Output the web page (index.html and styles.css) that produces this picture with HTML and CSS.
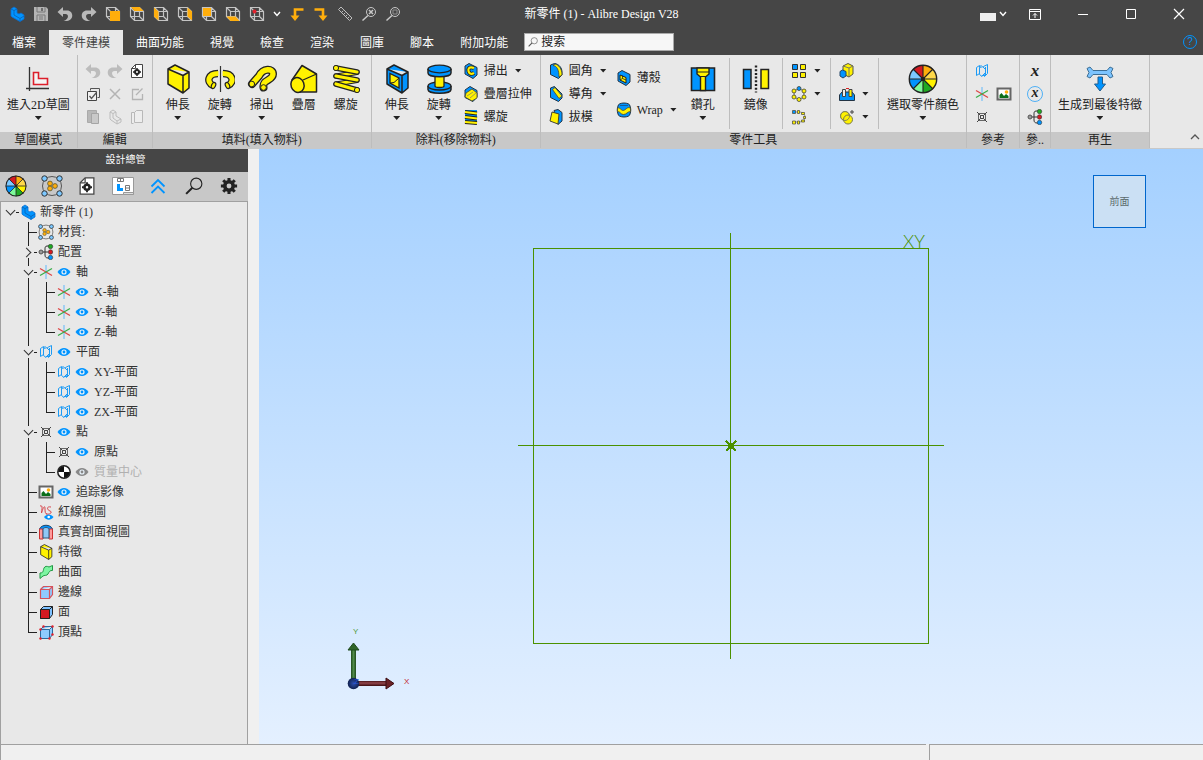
FILE: index.html
```html
<!DOCTYPE html>
<html lang="zh-Hant">

<head>
  <meta charset="UTF-8">
  <meta name="viewport" content="width=device-width, initial-scale=1.0">
  <title>新零件 (1) - Alibre Design V28</title>
  <link rel="stylesheet" href="styles.css">
</head>

<body>
  <!-- icon sprite -->
  <svg class="sprite" aria-hidden="true">
    <symbol id="i-part" viewBox="0 0 16 16">
      <path d="M2 3l3-2 3 2v4l2 1 2-1 3 2v4l-4 2.500-8-4.500-1-1z" fill="#0094ff" stroke="#0b6fd0" stroke-width=".8" />
      <path d="M2 3l3 1.500L8 3M5 4.500V9l6 3.500 4-2.500M11 12.500v3" fill="none" stroke="#0b5fb0" stroke-width=".8" />
    </symbol>
    <symbol id="i-save" viewBox="0 0 16 16">
      <path d="M1 1h12l2 2v12H1z" fill="#b4b4b4" />
      <path d="M4 1v5h8V1M4 15V9h8v6M6 11h4M6 13h4" fill="none" stroke="#787878" />
      <path d="M9 2v3" stroke="#555" stroke-width="1.500" />
    </symbol>
    <symbol id="i-undo" viewBox="0 0 16 16">
      <path d="M.5 6L6 1v3.500h4c7 0 7 10 0 10.500H6.500c5-1 6-7 2-7H6V11z" fill="currentColor" />
    </symbol>
    <symbol id="i-redo" viewBox="0 0 16 16">
      <path d="M15.500 6L10 1v3.500H6c-7 0-7 10 0 10.500h3.500c-5-1-6-7-2-7H10V11z" fill="currentColor" />
    </symbol>
    <symbol id="i-wire" viewBox="0 0 16 16">
      <path d="M1.500 1.500h9l4 4v9h-9l-4-4zM1.500 1.500l4 4h9M5.500 5.500v9M10.500 1.500v9h-9M10.500 10.500l4 4" fill="none" stroke="#c4c4c4" stroke-width="1.200" />
    </symbol>
    <symbol id="i-v-front" viewBox="0 0 16 16">
      <use href="#i-wire" /><path d="M5 5h10v10H5z" fill="#ffae0c" />
    </symbol>
    <symbol id="i-v-top" viewBox="0 0 16 16">
      <use href="#i-wire" /><path d="M2 1h8.500l4 4h-9z" fill="#ffae0c" />
    </symbol>
    <symbol id="i-v-left" viewBox="0 0 16 16">
      <use href="#i-wire" /><path d="M1 1.500l4.500 4v9L1 10.500z" fill="#ffae0c" />
    </symbol>
    <symbol id="i-v-right" viewBox="0 0 16 16">
      <use href="#i-wire" /><path d="M10.500 1.500l4.500 4v9l-4.500-4z" fill="#ffae0c" />
    </symbol>
    <symbol id="i-v-back" viewBox="0 0 16 16">
      <path d="M1 1h10v10H1z" fill="#ffae0c" /><use href="#i-wire" /><path d="M2 2h8v8H2z" fill="#ffae0c" />
    </symbol>
    <symbol id="i-v-bottom" viewBox="0 0 16 16">
      <use href="#i-wire" /><path d="M1.500 10.500h9l4 4.500h-9z" fill="#ffae0c" />
    </symbol>
    <symbol id="i-v-iso" viewBox="0 0 16 16">
      <use href="#i-wire" /><circle cx="5.500" cy="5.500" r="2" fill="#e0202c" />
    </symbol>
    <symbol id="i-rot-l" viewBox="0 0 16 16">
      <path d="M14.500 3.500H6V11" fill="none" stroke="#ffae0c" stroke-width="2.600" /><path d="M1.500 9.500h9L6 15z" fill="#ffae0c" />
    </symbol>
    <symbol id="i-rot-r" viewBox="0 0 16 16">
      <path d="M1.500 3.500H10V11" fill="none" stroke="#ffae0c" stroke-width="2.600" /><path d="M5.500 9.500h9L10 15z" fill="#ffae0c" />
    </symbol>
    <symbol id="i-ruler" viewBox="0 0 16 16">
      <path d="M4 1L1.500 3.500l11 11L15 12zM5 6l1.200-1.200M7 8l1.200-1.200M9 10l1.200-1.200M11 12l1.200-1.200" fill="none" stroke="#bdbdbd" />
    </symbol>
    <symbol id="i-zoomfit" viewBox="0 0 16 16">
      <circle cx="10" cy="6" r="4.500" fill="none" stroke="#c8c8c8" /><path d="M1.500 14.500L7 9.500M8 4l4 4M12 4L8 8" stroke="#c8c8c8" stroke-width="1.500" />
    </symbol>
    <symbol id="i-zoomwin" viewBox="0 0 16 16">
      <circle cx="10" cy="6" r="4.500" fill="none" stroke="#c8c8c8" /><path d="M8 4h4v4H8z" fill="none" stroke="#8e8e8e" /><path d="M1.500 14.500L7 9.500" stroke="#c8c8c8" stroke-width="1.500" />
    </symbol>
    <symbol id="i-chev" viewBox="0 0 8 8">
      <path d="M1 2l3 3.500L7 2" fill="none" stroke="currentColor" stroke-width="1.400" />
    </symbol>
    <symbol id="i-search" viewBox="0 0 16 16">
      <circle cx="10" cy="6" r="5" fill="none" stroke="currentColor" /><path d="M1 15l5.500-5.500" stroke="currentColor" stroke-width="1.800" />
    </symbol>

    <!-- ribbon, large -->
    <symbol id="b-sketch" viewBox="0 0 30 30">
      <path d="M10.500 8.500h5v6h9v6h-14z" fill="#f4f4f4" stroke="#dc1e2b" stroke-width="1.600" />
      <path d="M6.500 3v24M3 24.500h23" stroke="#333" stroke-width="1.300" />
    </symbol>
    <symbol id="b-extrude" viewBox="0 0 30 30">
      <path d="M5 5l7-4 14 7v16l-6 5-15-9zM5 5l15 6.500L26 8M20 11.500V29" fill="#fff200" stroke="#222" stroke-width="1.500" stroke-linejoin="round" />
    </symbol>
    <symbol id="b-revolve" viewBox="0 0 30 30">
      <path d="M8 21.500C1 18 3 9.500 13 9.500M23 21.500c7-3.500 5-12-5-12" fill="none" stroke="#222" stroke-width="7.500" />
      <path d="M8 21.500C1 18 3 9.500 13.500 9.500M23 21.500c7-3.500 5-12-5.500-12" fill="none" stroke="#fff200" stroke-width="5" />
      <ellipse cx="8.500" cy="21.500" rx="2" ry="3.200" fill="#fff200" stroke="#222" stroke-width="1.200" transform="rotate(25 8.500 21.500)" />
      <ellipse cx="22.500" cy="21.500" rx="2" ry="3.200" fill="#fff200" stroke="#222" stroke-width="1.200" transform="rotate(-25 22.500 21.500)" />
      <path d="M13.800 5h3.400v9h-3.400z" fill="#e8e8e8" />
      <path d="M15.500 2v26" stroke="#333" stroke-width="1.200" />
    </symbol>
    <symbol id="b-sweep" viewBox="0 0 30 30">
      <path d="M5 20l7-8c4-8 14-8 14-2 0 7-11 5-9.500 13.500" fill="none" stroke="#222" stroke-width="8" stroke-linecap="round" />
      <path d="M5 20l7-8c4-8 14-8 14-2 0 7-11 5-9.500 13.500" fill="none" stroke="#fff200" stroke-width="5.400" stroke-linecap="round" />
      <circle cx="4.800" cy="20" r="2.800" fill="#fff200" stroke="#222" /><circle cx="16.500" cy="23.500" r="2.800" fill="#fff200" stroke="#222" />
    </symbol>
    <symbol id="b-loft" viewBox="0 0 30 30">
      <path d="M13 1.500L27.500 10v18H9L3 16z" fill="#fff200" stroke="#222" stroke-width="1.500" stroke-linejoin="round" />
      <path d="M14 16l13.500-6" stroke="#222" stroke-width="1.300" />
      <ellipse cx="8.500" cy="21" rx="6.500" ry="7.500" transform="rotate(-20 8.500 21)" fill="#fff200" stroke="#222" stroke-width="1.500" />
    </symbol>
    <symbol id="b-helix" viewBox="0 0 30 30">
      <g fill="none" stroke-linecap="round">
        <path d="M26 8.500L5 12M26 16.500L5 20" stroke="#222" stroke-width="5" />
        <path d="M26 8.500L5 12M26 16.500L5 20" stroke="#fff200" stroke-width="2.800" />
        <path d="M5 4l21 4M5 12l21 4M5 20l21 6" stroke="#222" stroke-width="5.600" />
        <path d="M5 4l21 4M5 12l21 4M5 20l21 6" stroke="#fff200" stroke-width="3.200" />
      </g>
      <circle cx="5" cy="4" r="2.600" fill="#fff200" stroke="#222" /><circle cx="26" cy="26" r="2.600" fill="#fff200" stroke="#222" />
    </symbol>
    <symbol id="b-cut-extrude" viewBox="0 0 30 30">
      <path d="M5 5l7-4 14 7v16l-6 5-15-9zM5 5l15 6.500L26 8M20 11.500V29" fill="#0094ff" stroke="#222" stroke-width="1.500" stroke-linejoin="round" />
      <path d="M8 9.500l9 4.500v10l-9-5z" fill="#fff200" stroke="#222" stroke-width="1.300" /><path d="M17 14l-5 4.500L8 19" fill="none" stroke="#222" />
    </symbol>
    <symbol id="b-cut-revolve" viewBox="0 0 30 30">
      <path d="M4 22v3.500c0 5 23 5 23 0V22" fill="#0094ff" stroke="#222" stroke-width="1.500" />
      <ellipse cx="15.500" cy="22" rx="11.500" ry="4" fill="#0094ff" stroke="#222" stroke-width="1.300" />
      <path d="M11 10v12c0 2 9 2 9 0V10z" fill="#fff200" stroke="#222" stroke-width="1.300" />
      <path d="M4 5v4c0 5 23 5 23 0V5" fill="#0094ff" stroke="#222" stroke-width="1.500" />
      <ellipse cx="15.500" cy="5" rx="11.500" ry="3.800" fill="#0094ff" stroke="#222" stroke-width="1.300" />
    </symbol>
    <symbol id="b-hole" viewBox="0 0 30 30">
      <path d="M3.500 4h23v22.500h-23z" fill="#0094ff" stroke="#222" stroke-width="1.600" />
      <path d="M9 4h12v6l-3.500 3v13.500h-5V13L9 10z" fill="#fff200" stroke="#222" stroke-width="1.400" /><path d="M9 8h12M12 12.500h6" stroke="#222" />
    </symbol>
    <symbol id="b-mirror" viewBox="0 0 30 30">
      <path d="M2.500 5.500H10v19H2.500z" fill="#0094ff" stroke="#222" stroke-width="1.500" />
      <path d="M20 5.500h7.500v19H20z" fill="#fff200" stroke="#222" stroke-width="1.500" />
      <path d="M15 1.500v27" stroke="#222" stroke-width="2.400" stroke-dasharray="2 1.700" />
    </symbol>
    <symbol id="b-wheel" viewBox="0 0 30 30">
      <path d="M15 15V1a14 14 0 0 1 9.900 4.100z" fill="#ffae0c" /><path d="M15 15l9.900-9.900A14 14 0 0 1 29 15z" fill="#ffd94a" />
      <path d="M15 15h14a14 14 0 0 1-4.100 9.900z" fill="#fff200" /><path d="M15 15l9.900 9.900A14 14 0 0 1 15 29z" fill="#1faa22" />
      <path d="M15 15v14a14 14 0 0 1-9.900-4.100z" fill="#7dfa98" /><path d="M15 15l-9.900 9.900A14 14 0 0 1 1 15z" fill="#0094ff" />
      <path d="M15 15H1a14 14 0 0 1 4.100-9.900z" fill="#7cc8ff" /><path d="M15 15L5.100 5.100A14 14 0 0 1 15 1z" fill="#d41a22" />
      <path d="M15 1v28M1 15h28M5 5l20 20M25 5L5 25" stroke="#222" stroke-width="1.100" /><circle cx="15" cy="15" r="13.700" fill="none" stroke="#222" stroke-width="1.400" /><circle cx="15" cy="15" r="2" fill="#222" />
    </symbol>
    <symbol id="b-regen" viewBox="0 0 30 30">
      <path d="M2 4.500L5 3l3 3.500h14L25 3l3 1.500-2 4 2 4-3 1.500-3-3.500H8L5 14l-3-1.500 2-4z" fill="#7cc4ff" stroke="#3d6f96" />
      <path d="M13 13h4.500v7h3L15 27l-5.500-7H13z" fill="#0094ff" stroke="#235c8c" />
    </symbol>

    <!-- ribbon, small -->
    <symbol id="i-props" viewBox="0 0 16 16">
      <path d="M6.500 1.500h7v13h-11v-9z" fill="#fff" stroke="#444" /><path d="M2.500 5.500h4v-4" fill="none" stroke="#444" />
      <circle cx="8" cy="9" r="2" fill="#fff" stroke="#222" stroke-width="2" /><path d="M8 5v1.500M8 11.500V13M4 9h1.500M10.500 9H12" stroke="#222" stroke-width="1.500" />
    </symbol>
    <symbol id="i-select" viewBox="0 0 16 16">
      <path d="M5.500 4.500v-2h9v9h-2" fill="none" stroke="#555" /><path d="M2.500 5.500h9v9h-9z" fill="#f2f2f2" stroke="#444" /><path d="M4.500 10l2 2.500 5-6" fill="none" stroke="#555" stroke-width="1.300" />
    </symbol>
    <symbol id="i-x" viewBox="0 0 16 16"><path d="M3 3l10 10M13 3L3 13" stroke="#b4b4b4" stroke-width="1.500" /></symbol>
    <symbol id="i-edit" viewBox="0 0 16 16"><path d="M10 3.500H3.500v10h10V8M7 9l6.500-6.500" fill="none" stroke="#b4b4b4" stroke-width="1.300" /></symbol>
    <symbol id="i-paste" viewBox="0 0 16 16"><path d="M2.500 1.500h9v12h-9z" fill="#b8b8b8" stroke="#aaa" /><path d="M6.500 4.500h7v10h-7z" fill="#c9c9c9" stroke="#a5a5a5" /></symbol>
    <symbol id="i-partgray" viewBox="0 0 16 16"><path d="M3 3l3-2 3 2v4l5 3v3l-4 2-6-4-1-1zM3 3l3 1.500L9 3M6 4.500V9l4 3 4-2M10 12v3" fill="none" stroke="#bcbcbc" /></symbol>
    <symbol id="i-copy" viewBox="0 0 16 16"><path d="M4.500 14.500h-2v-11h3M7.500 1.500h6v12h-8v-10z" fill="#ededed" stroke="#b8b8b8" /></symbol>
    <symbol id="i-c-sweep" viewBox="0 0 16 16">
      <path d="M2 3l4-2.500 8 4V12l-4 3.500L2 11z" fill="#0094ff" stroke="#234" /><path d="M11 5C6 3 5 6 5.500 8s2 4 5.500 2" fill="none" stroke="#222" stroke-width="3.800" /><path d="M11 5C6 3 5 6 5.500 8s2 4 5.500 2" fill="none" stroke="#fff200" stroke-width="2.200" />
    </symbol>
    <symbol id="i-c-loft" viewBox="0 0 16 16">
      <path d="M2 4l5-3.500 7 4V11l-4 4.500-8-4z" fill="#0094ff" stroke="#234" /><path d="M3 7l6-4 5 4v5l-5 3-7-4z" fill="#fff200" stroke="#443" stroke-width=".8" /><path d="M4 10l6-4M7 12l6-5" fill="none" stroke="#886" stroke-width=".8" />
    </symbol>
    <symbol id="i-c-helix" viewBox="0 0 16 16">
      <path d="M2 1h12v14H2z" fill="#0094ff" /><path d="M2 3l12 1.500M2 8l12 1.500M2 13l12 1" stroke="#222" stroke-width="3.800" /><path d="M2 3l12 1.500M2 8l12 1.500M2 13l12 1" stroke="#fff200" stroke-width="2.200" />
    </symbol>
    <symbol id="i-fillet" viewBox="0 0 16 16">
      <path d="M2.500 2l4-1.500C11 1 14 5 14 9v3l-3.500 3.500-8-4z" fill="#0094ff" stroke="#234" /><path d="M5 2.500C9 3 11 7 11 14l3-2c0-6-3-10-7-11z" fill="#fff200" stroke="#443" stroke-width=".8" />
    </symbol>
    <symbol id="i-chamfer" viewBox="0 0 16 16">
      <path d="M2.500 2l4-1.500L14 8v4l-3.500 3.500-8-4z" fill="#0094ff" stroke="#234" /><path d="M4.500 3.500l2.500-2L14 10l-3 2.500z" fill="#fff200" stroke="#443" stroke-width=".8" />
    </symbol>
    <symbol id="i-draft" viewBox="0 0 16 16">
      <path d="M6 1.500l4-1 4 3V12l-4 3.500z" fill="#0094ff" stroke="#234" /><path d="M4 3l7 2-1 10-8-3z" fill="#fff200" stroke="#443" />
    </symbol>
    <symbol id="i-shell" viewBox="0 0 16 16">
      <path d="M2 3l4-2.500 8 4V12l-4 3.500L2 11z" fill="#0094ff" stroke="#234" /><path d="M4 5l6 2.500V13l-6-3z" fill="#fff200" stroke="#222" /><path d="M4 10l2.500-1.500L10 10M6.500 5.500v3" fill="none" stroke="#222" stroke-width=".8" />
    </symbol>
    <symbol id="i-wrap" viewBox="0 0 16 16">
      <path d="M2 4c0-4 12-4 12 0 1 3 1 5 0 8 0 4-12 4-12 0-1-3-1-5 0-8z" fill="#0094ff" stroke="#234" /><path d="M1.500 6c3-1 4 4 7 2s3-3 6-2v3.500c-3 0-4 3-7 3s-3-3-6-3z" fill="#fff200" stroke="#443" stroke-width=".8" /><path d="M4 3.500h8" stroke="#135c9c" />
    </symbol>
    <symbol id="i-pat-lin" viewBox="0 0 16 16">
      <g stroke="#333"><path d="M1.500 1.500h5v5h-5z" fill="#0094ff" /><path d="M9.500 1.500h5v5h-5zM1.500 9.500h5v5h-5zM9.500 9.500h5v5h-5z" fill="#fff200" /></g>
    </symbol>
    <symbol id="i-pat-circ" viewBox="0 0 16 16">
      <circle cx="8" cy="8" r="5" fill="none" stroke="#555" stroke-width=".8" />
      <g stroke="#443" stroke-width=".8" fill="#fff200"><circle cx="3" cy="5" r="2" /><circle cx="13" cy="5" r="2" /><circle cx="3" cy="11" r="2" /><circle cx="13" cy="11" r="2" /><circle cx="8" cy="13.500" r="2" /><circle cx="8" cy="2.500" r="2" fill="#0094ff" /></g>
    </symbol>
    <symbol id="i-pat-path" viewBox="0 0 16 16">
      <path d="M2 3h6c8 0 8 10 0 10H2" fill="none" stroke="#888" />
      <g stroke="#554" stroke-width=".8" fill="#fff200"><path d="M1.500 1.500h3v3h-3z" fill="#0094ff" /><path d="M6.500 1.500h2v3h-2zM10.500 3.500h3v2h-3zM12.500 7.500h2v2h-2zM10.500 11h3v2h-3zM6.500 12h2v3h-2zM1.500 12h3v3h-3z" /></g>
    </symbol>
    <symbol id="i-scale" viewBox="0 0 16 16">
      <path d="M4 3l5-2.500 5 2.500v8l-4 3-6-3z" fill="#fff200" stroke="#554" /><path d="M4 3l6 2 4-2M10 5v9" fill="none" stroke="#776" /><path d="M1 8.500L3.500 7 7 8.500V13l-3 2-3-2z" fill="#0094ff" stroke="#246" />
    </symbol>
    <symbol id="i-bool" viewBox="0 0 16 16">
      <path d="M.5 14.500V9L3 6h10l2.500 3v5.500z" fill="#0094ff" stroke="#234" /><path d="M3.500 3.500h3v7h-3z" fill="#eee" stroke="#444" /><path d="M10 3.500h3v7h-3z" fill="#fff200" stroke="#444" /><path d="M7 2.500h3" stroke="#d22" />
    </symbol>
    <symbol id="i-union" viewBox="0 0 16 16">
      <circle cx="6" cy="7" r="4.500" fill="#fff200" stroke="#885" /><circle cx="9" cy="10.500" r="4.500" fill="#fff200" stroke="#775" /><circle cx="6" cy="7" r="4.500" fill="none" stroke="#885" /><path d="M11 3h4M13 1v4" stroke="#444" />
    </symbol>
    <symbol id="i-plane" viewBox="0 0 16 16">
      <path d="M5.500 10.500l-3 2v-8l3-2v2l4-1 4-2v9l-3 3v-2M5.500 4.500v7l2 1.500 4-1v-8M5.500 4l2-2M9 4l3 3M7.500 13.500l4-4" fill="none" stroke="#1c9bf5" />
    </symbol>
    <symbol id="i-axis" viewBox="0 0 16 16">
      <path d="M8 1v14" stroke="#8ec8f5" stroke-width="1.500" /><path d="M2 4.500l12 7" stroke="#de4646" stroke-width="1.300" /><path d="M2 11.500l12-7" stroke="#3aae4a" stroke-width="1.300" />
    </symbol>
    <symbol id="i-image" viewBox="0 0 16 16">
      <path d="M1.500 2.500h13v11h-13z" fill="#fff" stroke="#666" stroke-width="2" /><path d="M3.500 12V9l2-2 2.500 3 2-2 2.500 2v2z" fill="#0b6e1a" /><circle cx="10.500" cy="6" r="1.800" fill="#ffae0c" />
    </symbol>
    <symbol id="i-point" viewBox="0 0 16 16">
      <path d="M4.500 4.500h7v7h-7z" fill="none" stroke="#666" /><path d="M6.500 6.500h3v3h-3z" fill="none" stroke="#444" /><path d="M3 3l3.500 3.500M13 3L9.500 6.500M3 13l3.500-3.500M13 13L9.500 9.500" stroke="#444" />
    </symbol>
    <symbol id="i-config" viewBox="0 0 16 16">
      <path d="M3 8h7M12 2H9C7 2 7 4 7 5v6c0 2 1 3 3 3h2" fill="none" stroke="#333" />
      <circle cx="3" cy="8" r="2" fill="#999" stroke="#555" /><circle cx="12.500" cy="2.500" r="2.200" fill="#1faa22" stroke="#333" stroke-width=".6" /><circle cx="12.500" cy="8" r="2.200" fill="#d41a22" stroke="#333" stroke-width=".6" /><circle cx="12.500" cy="13.500" r="2.200" fill="#0094ff" stroke="#333" stroke-width=".6" />
    </symbol>

    <!-- design explorer -->
    <symbol id="i-material" viewBox="0 0 22 22">
      <circle cx="11" cy="11" r="9.500" fill="none" stroke="#555" />
      <g fill="#7cc8ff" stroke="#333"><circle cx="3.500" cy="3.500" r="2.700" /><circle cx="18.500" cy="3.500" r="2.700" /><circle cx="3.500" cy="18.500" r="2.700" /><circle cx="18.500" cy="18.500" r="2.700" /></g>
      <g fill="#ffae0c" stroke="#553" stroke-width=".8"><circle cx="9" cy="8.500" r="2.400" /><circle cx="9" cy="13.500" r="2.400" /><circle cx="14" cy="11" r="2.400" /></g>
    </symbol>
    <symbol id="i-layout" viewBox="0 0 22 20">
      <path d="M.5 1.500h21v17H.5z" fill="#fff" stroke="#999" /><path d="M5.500 2.500h6v3h-6zM8.500 2.500v3M13.500 9.500h4v5h-4zM13.500 12h4" fill="none" stroke="#777" /><path d="M5 8h3v4h3v3H5z" fill="#0094ff" /><path d="M11.500 16.500h10v2h-10z" fill="#ddd" stroke="#999" />
    </symbol>
    <symbol id="i-up" viewBox="0 0 16 16"><path d="M1.500 8.500L8 2l6.500 6.500M1.500 15L8 8.500 14.500 15" fill="none" stroke="#0094ff" stroke-width="1.800" /></symbol>
    <symbol id="i-gear" viewBox="0 0 20 20">
      <path d="M10 1v18M1 10h18M3.600 3.600l12.800 12.800M16.400 3.600L3.600 16.400" stroke="#222" stroke-width="3.400" /><circle cx="10" cy="10" r="4.700" fill="#c8c8c8" stroke="#222" stroke-width="4" />
    </symbol>
    <symbol id="i-eye" viewBox="0 0 14 10">
      <path d="M.5 5C4-.3 10-.3 13.500 5 10 10.300 4 10.300.5 5z" fill="currentColor" /><circle cx="7" cy="5" r="2.600" fill="#e8f2fa" /><circle cx="7" cy="5" r="1.400" fill="currentColor" />
    </symbol>
    <symbol id="i-mass" viewBox="0 0 16 16">
      <circle cx="8" cy="8" r="6.500" fill="#fff" /><path d="M8 8V2a6 6 0 0 0-6 6zM8 8v6a6 6 0 0 0 6-6z" fill="#111" /><circle cx="8" cy="8" r="6.200" fill="none" stroke="#222" stroke-width="1.500" />
    </symbol>
    <symbol id="i-redline" viewBox="0 0 16 16">
      <path d="M2 2c3-1 2 2 1.500 7C5 4 7 0 7 5c0 4 1 6 2 4M13 3c-5-1-4 3-1 4s0 4-4 3" fill="none" stroke="#d8474d" /><path d="M6 13c2.500-3.500 7-3.500 9.500 0-2.500 3.500-7 3.500-9.500 0z" fill="#0094ff" /><circle cx="10.700" cy="13" r="1.300" fill="#fff" />
    </symbol>
    <symbol id="i-section" viewBox="0 0 16 16">
      <path d="M1.500 5c2-5 11-5 13 0" fill="#0094ff" stroke="#246" /><path d="M1.500 5h3.500v10H1.500zM11 5h3.500v10H11z" fill="#ff9c9c" stroke="#c33" /><path d="M5 5c1-2 5-2 6 0v9H5z" fill="#8fc8f5" stroke="#357" />
    </symbol>
    <symbol id="i-surface" viewBox="0 0 16 16">
      <path d="M2 9c4 0 3-3 4-5s3-2 5-1l3.500-1.500v5C12 6 11 8 10 10s-4 1-5 2l-3 2.500z" fill="#7df5a2" stroke="#294" />
    </symbol>
    <symbol id="i-edge" viewBox="0 0 16 16">
      <path d="M2.500 5.500l3-3h9v8l-3 4h-9zM2.500 5.500h9l3-3M11.500 5.500v9" fill="#8fcbff" stroke="#d4525c" stroke-width="1.200" />
    </symbol>
    <symbol id="i-face" viewBox="0 0 16 16">
      <path d="M2.500 5.500l3-3h9v8l-3 4h-9z" fill="#7cc0ff" stroke="#222" /><path d="M2.500 5.500h9v9h-9z" fill="#d41a22" stroke="#222" /><path d="M11.500 5.500l3-3" stroke="#222" />
    </symbol>
    <symbol id="i-vertex" viewBox="0 0 16 16">
      <path d="M2.500 5.500l3-3h9v8l-3 4h-9zM2.500 5.500h9l3-3M11.500 5.500v9" fill="#8fcbff" stroke="#2b6a9c" />
      <g fill="#e0202c"><circle cx="2.500" cy="5.500" r="1.200" /><circle cx="5.500" cy="2.500" r="1.200" /><circle cx="14.500" cy="2.500" r="1.200" /><circle cx="11.500" cy="14.500" r="1.200" /><circle cx="2.500" cy="14.500" r="1.200" /><circle cx="14.500" cy="10.500" r="1.200" /></g>
    </symbol>
  </svg>

  <header class="titlebar">
    <div class="quick">
      <button class="qbtn" aria-label="Alibre"><svg><use href="#i-part" /></svg></button>
      <button class="qbtn" aria-label="儲存"><svg><use href="#i-save" /></svg></button>
      <button class="qbtn" aria-label="復原"><svg><use href="#i-undo" /></svg></button>
      <button class="qbtn" aria-label="重做"><svg><use href="#i-redo" /></svg></button>
      <button class="qbtn" aria-label="前視"><svg><use href="#i-v-front" /></svg></button>
      <button class="qbtn" aria-label="上視"><svg><use href="#i-v-top" /></svg></button>
      <button class="qbtn" aria-label="左視"><svg><use href="#i-v-left" /></svg></button>
      <button class="qbtn" aria-label="右視"><svg><use href="#i-v-right" /></svg></button>
      <button class="qbtn" aria-label="後視"><svg><use href="#i-v-back" /></svg></button>
      <button class="qbtn" aria-label="下視"><svg><use href="#i-v-bottom" /></svg></button>
      <button class="qbtn" aria-label="等角"><svg><use href="#i-v-iso" /></svg></button>
      <button class="qbtn qbtn-more" aria-label="更多視圖"><svg><use href="#i-chev" /></svg></button>
      <button class="qbtn" aria-label="向左旋轉"><svg><use href="#i-rot-l" /></svg></button>
      <button class="qbtn" aria-label="向右旋轉"><svg><use href="#i-rot-r" /></svg></button>
      <button class="qbtn" aria-label="測量"><svg><use href="#i-ruler" /></svg></button>
      <button class="qbtn" aria-label="縮放至適合"><svg><use href="#i-zoomfit" /></svg></button>
      <button class="qbtn" aria-label="視窗縮放"><svg><use href="#i-zoomwin" /></svg></button>
    </div>
    <div class="title">新零件 (1) - Alibre Design V28</div>
    <div class="window-controls">
      <button class="user-btn" aria-label="使用者"><span class="user-block"></span><svg width="8" height="8"><use href="#i-chev" /></svg></button>
      <button class="win-btn" aria-label="功能區顯示"><svg width="12" height="12" viewBox="0 0 12 12"><path d="M.5 1.500h11v10H.5zM.5 3.500h11M6 10V5.500M4 7.500l2-2 2 2" fill="none" stroke="#fff" /></svg></button>
      <button class="win-btn" aria-label="最小化"><svg width="12" height="12" viewBox="0 0 12 12"><path d="M1 6.500h10" stroke="#fff" /></svg></button>
      <button class="win-btn" aria-label="最大化"><svg width="12" height="12" viewBox="0 0 12 12"><path d="M1.500 1.500h9v9h-9z" fill="none" stroke="#fff" /></svg></button>
      <button class="win-btn" aria-label="關閉"><svg width="12" height="12" viewBox="0 0 12 12"><path d="M1 1l10 10M11 1L1 11" stroke="#fff" stroke-width="1.200" /></svg></button>
    </div>
  </header>

  <nav class="tabs">
    <button class="tab tab-file">檔案</button>
    <button class="tab active">零件建模</button>
    <button class="tab">曲面功能</button>
    <button class="tab">視覺</button>
    <button class="tab">檢查</button>
    <button class="tab">渲染</button>
    <button class="tab">圖庫</button>
    <button class="tab">腳本</button>
    <button class="tab">附加功能</button>
    <label class="search">
      <svg><use href="#i-search" /></svg>
      <input type="text" placeholder="搜索" aria-label="搜索">
    </label>
    <button class="help" aria-label="說明">?</button>
  </nav>

  <section class="ribbon">
    <div class="group">
      <div class="group-body">
        <button class="big"><svg><use href="#b-sketch" /></svg>進入2D草圖<span class="caret"></span></button>
      </div>
      <div class="group-label">草圖模式</div>
    </div>

    <div class="group">
      <div class="group-body">
        <div class="icon-grid">
          <button class="ibtn muted" aria-label="復原"><svg><use href="#i-undo" /></svg></button>
          <button class="ibtn muted" aria-label="重做"><svg><use href="#i-redo" /></svg></button>
          <button class="ibtn" aria-label="屬性"><svg><use href="#i-props" /></svg></button>
          <button class="ibtn" aria-label="選取"><svg><use href="#i-select" /></svg></button>
          <button class="ibtn" aria-label="刪除"><svg><use href="#i-x" /></svg></button>
          <button class="ibtn" aria-label="編輯"><svg><use href="#i-edit" /></svg></button>
          <button class="ibtn" aria-label="貼上"><svg><use href="#i-paste" /></svg></button>
          <button class="ibtn" aria-label="複製零件"><svg><use href="#i-partgray" /></svg></button>
          <button class="ibtn" aria-label="複製"><svg><use href="#i-copy" /></svg></button>
        </div>
      </div>
      <div class="group-label">編輯</div>
    </div>

    <div class="group">
      <div class="group-body">
        <button class="big"><svg><use href="#b-extrude" /></svg>伸長<span class="caret"></span></button>
        <button class="big"><svg><use href="#b-revolve" /></svg>旋轉<span class="caret"></span></button>
        <button class="big"><svg><use href="#b-sweep" /></svg>掃出<span class="caret"></span></button>
        <button class="big"><svg><use href="#b-loft" /></svg>疊層</button>
        <button class="big"><svg><use href="#b-helix" /></svg>螺旋</button>
      </div>
      <div class="group-label">填料(填入物料)</div>
    </div>

    <div class="group">
      <div class="group-body">
        <button class="big"><svg><use href="#b-cut-extrude" /></svg>伸長<span class="caret"></span></button>
        <button class="big"><svg><use href="#b-cut-revolve" /></svg>旋轉<span class="caret"></span></button>
        <div class="stack">
          <button class="tool"><svg><use href="#i-c-sweep" /></svg>掃出<span class="caret"></span></button>
          <button class="tool"><svg><use href="#i-c-loft" /></svg>疊層拉伸</button>
          <button class="tool"><svg><use href="#i-c-helix" /></svg>螺旋</button>
        </div>
      </div>
      <div class="group-label">除料(移除物料)</div>
    </div>

    <div class="group">
      <div class="group-body">
        <div class="stack">
          <button class="tool"><svg><use href="#i-fillet" /></svg>圓角<span class="caret"></span></button>
          <button class="tool"><svg><use href="#i-chamfer" /></svg>導角<span class="caret"></span></button>
          <button class="tool"><svg><use href="#i-draft" /></svg>拔模</button>
        </div>
        <div class="stack stack-two">
          <button class="tool"><svg><use href="#i-shell" /></svg>薄殼</button>
          <button class="tool"><svg><use href="#i-wrap" /></svg>Wrap<span class="caret"></span></button>
        </div>
        <button class="big"><svg><use href="#b-hole" /></svg>鑽孔<span class="caret"></span></button>
        <span class="sep"></span>
        <button class="big"><svg><use href="#b-mirror" /></svg>鏡像</button>
        <span class="sep"></span>
        <div class="stack">
          <button class="tool" aria-label="線性陣列"><svg><use href="#i-pat-lin" /></svg><span class="caret"></span></button>
          <button class="tool" aria-label="環形陣列"><svg><use href="#i-pat-circ" /></svg><span class="caret"></span></button>
          <button class="tool" aria-label="路徑陣列"><svg><use href="#i-pat-path" /></svg></button>
        </div>
        <span class="sep"></span>
        <div class="stack">
          <button class="tool" aria-label="比例"><svg><use href="#i-scale" /></svg></button>
          <button class="tool" aria-label="直接編輯"><svg><use href="#i-bool" /></svg><span class="caret"></span></button>
          <button class="tool" aria-label="布林"><svg><use href="#i-union" /></svg><span class="caret"></span></button>
        </div>
        <span class="sep"></span>
        <button class="big"><svg><use href="#b-wheel" /></svg>選取零件顏色<span class="caret"></span></button>
      </div>
      <div class="group-label">零件工具</div>
    </div>

    <div class="group">
      <div class="group-body">
        <div class="icon-grid icon-grid-cols">
          <button class="ibtn" aria-label="平面"><svg><use href="#i-plane" /></svg></button>
          <button class="ibtn" aria-label="軸"><svg><use href="#i-axis" /></svg></button>
          <button class="ibtn" aria-label="點"><svg><use href="#i-point" /></svg></button>
          <button class="ibtn ibtn-mid" aria-label="追踪影像"><svg><use href="#i-image" /></svg></button>
        </div>
      </div>
      <div class="group-label">參考</div>
    </div>

    <div class="group">
      <div class="group-body">
        <div class="icon-grid icon-grid-cols">
          <button class="ibtn var">x</button>
          <button class="ibtn var"><span class="var-ring">x</span></button>
          <button class="ibtn" aria-label="配置"><svg><use href="#i-config" /></svg></button>
        </div>
      </div>
      <div class="group-label">參..</div>
    </div>

    <div class="group">
      <div class="group-body">
        <button class="big"><svg><use href="#b-regen" /></svg>生成到最後特徵<span class="caret"></span></button>
      </div>
      <div class="group-label">再生</div>
    </div>

    <button class="collapse" aria-label="收合"><svg width="10" height="6" viewBox="0 0 10 6"><path d="M1 5l4-4 4 4" fill="none" stroke="#555" stroke-width="1.300" /></svg></button>
  </section>

  <main class="workspace">
    <aside class="explorer">
      <div class="explorer-title">設計總管</div>
      <div class="explorer-tools">
        <button aria-label="顏色"><svg width="22" height="22"><use href="#b-wheel" /></svg></button>
        <button aria-label="材質"><svg width="22" height="22"><use href="#i-material" /></svg></button>
        <button aria-label="屬性"><svg width="20" height="20"><use href="#i-props" /></svg></button>
        <button aria-label="版面"><svg width="22" height="20"><use href="#i-layout" /></svg></button>
        <button aria-label="收合全部"><svg width="16" height="16"><use href="#i-up" /></svg></button>
        <button aria-label="搜尋"><svg width="18" height="18"><use href="#i-search" /></svg></button>
        <button aria-label="設定"><svg width="18" height="18"><use href="#i-gear" /></svg></button>
      </div>
      <ul class="tree">
        <li><i class="g open root"></i><svg><use href="#i-part" /></svg><span>新零件 (1)</span></li>
        <li><i class="g"></i><i class="g tee"></i><svg><use href="#i-material" /></svg><span>材質:</span></li>
        <li><i class="g"></i><i class="g open closed"></i><svg><use href="#i-config" /></svg><span>配置</span></li>
        <li><i class="g"></i><i class="g open"></i><svg><use href="#i-axis" /></svg><svg class="eye"><use href="#i-eye" /></svg><span>軸</span></li>
        <li><i class="g"></i><i class="g line"></i><i class="g tee"></i><svg><use href="#i-axis" /></svg><svg class="eye"><use href="#i-eye" /></svg><span>X-軸</span></li>
        <li><i class="g"></i><i class="g line"></i><i class="g tee"></i><svg><use href="#i-axis" /></svg><svg class="eye"><use href="#i-eye" /></svg><span>Y-軸</span></li>
        <li><i class="g"></i><i class="g line"></i><i class="g end"></i><svg><use href="#i-axis" /></svg><svg class="eye"><use href="#i-eye" /></svg><span>Z-軸</span></li>
        <li><i class="g"></i><i class="g open"></i><svg><use href="#i-plane" /></svg><svg class="eye"><use href="#i-eye" /></svg><span>平面</span></li>
        <li><i class="g"></i><i class="g line"></i><i class="g tee"></i><svg><use href="#i-plane" /></svg><svg class="eye"><use href="#i-eye" /></svg><span>XY-平面</span></li>
        <li><i class="g"></i><i class="g line"></i><i class="g tee"></i><svg><use href="#i-plane" /></svg><svg class="eye"><use href="#i-eye" /></svg><span>YZ-平面</span></li>
        <li><i class="g"></i><i class="g line"></i><i class="g end"></i><svg><use href="#i-plane" /></svg><svg class="eye"><use href="#i-eye" /></svg><span>ZX-平面</span></li>
        <li><i class="g"></i><i class="g open"></i><svg><use href="#i-point" /></svg><svg class="eye"><use href="#i-eye" /></svg><span>點</span></li>
        <li><i class="g"></i><i class="g line"></i><i class="g tee"></i><svg><use href="#i-point" /></svg><svg class="eye"><use href="#i-eye" /></svg><span>原點</span></li>
        <li class="off"><i class="g"></i><i class="g line"></i><i class="g end"></i><svg><use href="#i-mass" /></svg><svg class="eye"><use href="#i-eye" /></svg><span>質量中心</span></li>
        <li><i class="g"></i><i class="g tee"></i><svg><use href="#i-image" /></svg><svg class="eye"><use href="#i-eye" /></svg><span>追踪影像</span></li>
        <li><i class="g"></i><i class="g tee"></i><svg><use href="#i-redline" /></svg><span>紅線視圖</span></li>
        <li><i class="g"></i><i class="g tee"></i><svg><use href="#i-section" /></svg><span>真實剖面視圖</span></li>
        <li><i class="g"></i><i class="g tee"></i><svg><use href="#b-extrude" /></svg><span>特徵</span></li>
        <li><i class="g"></i><i class="g tee"></i><svg><use href="#i-surface" /></svg><span>曲面</span></li>
        <li><i class="g"></i><i class="g tee"></i><svg><use href="#i-edge" /></svg><span>邊線</span></li>
        <li><i class="g"></i><i class="g tee"></i><svg><use href="#i-face" /></svg><span>面</span></li>
        <li><i class="g"></i><i class="g end"></i><svg><use href="#i-vertex" /></svg><span>頂點</span></li>
      </ul>
    </aside>

    <section class="viewport">
      <svg class="scene" width="426" height="427" viewBox="0 0 426 427">
        <g class="plane-lines">
          <path d="M15.500 15.500h395v395h-395z" />
          <path d="M212.500 0v426M0 212.500h426" />
          <path d="M208 208l10 10M218 208l-10 10" stroke-width="2" />
          <path d="M210.500 210.500h5v5h-5z" />
        </g>
        <text class="plane-name" x="385" y="15">XY</text>
      </svg>

      <svg class="triad" width="68" height="68" viewBox="0 0 68 68">
        <defs>
          <linearGradient id="gy"><stop offset="0" stop-color="#1f4a1c" /><stop offset=".5" stop-color="#4f8a48" /><stop offset="1" stop-color="#1f4a1c" /></linearGradient>
          <linearGradient id="gx" x2="0" y2="1"><stop offset="0" stop-color="#4a1418" /><stop offset=".4" stop-color="#94474d" /><stop offset="1" stop-color="#3c0c10" /></linearGradient>
          <radialGradient id="gz"><stop offset="0" stop-color="#2c4fae" /><stop offset="1" stop-color="#10204e" /></radialGradient>
        </defs>
        <path d="M6 24h5v32H6z" fill="url(#gy)" /><path d="M3 25l5.500-7 5.500 7z" fill="#2f6529" stroke="#1f4a1c" />
        <path d="M12 56h30v5H12z" fill="url(#gx)" /><path d="M41 53l8 5.500-8 5.500z" fill="#6b2227" stroke="#3c0c10" />
        <circle cx="8.500" cy="58.500" r="5.800" fill="url(#gz)" />
        <text class="ax-z" x="9" y="59">Z</text>
        <text class="ax-y" x="8" y="9">Y</text>
        <text class="ax-x" x="59" y="59">X</text>
      </svg>

      <button class="viewcube">前面</button>
    </section>
  </main>

  <footer class="statusbar">
    <div class="status-panel"></div>
    <div class="status-panel"></div>
  </footer>
</body>

</html>
```
FILE: styles.css
```css
* {
  box-sizing: border-box;
}

body {
  margin: 0;
  height: 100vh;
  display: flex;
  flex-direction: column;
  overflow: hidden;
  background: #f0f0f0;
  color: #222;
  font: 12px/16px "Liberation Serif", "Noto Sans CJK TC", serif;
}

button {
  margin: 0;
  padding: 0;
  border: 0;
  background: none;
  color: inherit;
  font: inherit;
  cursor: default;
}

svg {
  display: block;
  flex: none;
}

.sprite {
  display: none;
}

/* title bar */
.titlebar {
  display: grid;
  grid-template-columns: 1fr auto 1fr;
  align-items: center;
  height: 28px;
  background: #464646;
  color: #fff;
}

.quick {
  display: flex;
  padding-left: 5px;
}

.qbtn {
  display: flex;
  align-items: center;
  justify-content: center;
  width: 24px;
  height: 28px;
  color: #b9b9b9;
}

.qbtn svg {
  width: 16px;
  height: 16px;
}

.qbtn-more {
  width: 16px;
  color: #fff;
}

.qbtn-more svg {
  width: 8px;
  height: 8px;
}

.title {
  white-space: nowrap;
}

.window-controls {
  display: flex;
  justify-content: flex-end;
}

.user-btn,
.win-btn {
  display: flex;
  align-items: center;
  justify-content: center;
  height: 28px;
}

.user-btn {
  gap: 3px;
  width: 36px;
}

.user-block {
  width: 16px;
  height: 8px;
  margin-top: 6px;
  background: #eee;
}

.win-btn {
  width: 48px;
}

/* tabs */
.tabs {
  display: flex;
  align-items: flex-end;
  height: 27px;
  background: #464646;
  color: #fff;
}

.tab {
  height: 25px;
  padding: 0 13px;
}

.tab-file {
  padding-left: 12px;
}

.tab.active {
  background: #e8e8e8;
  color: #444;
}

.search {
  display: flex;
  align-items: center;
  width: 150px;
  height: 18px;
  margin: 0 0 4px 3px;
  padding: 0 3px;
  gap: 3px;
  border: 1px solid #aaa;
  background: #f7f7f7;
  color: #555;
}

.search svg {
  width: 10px;
  height: 10px;
}

.search input {
  width: 100%;
  padding: 0;
  border: 0;
  outline: 0;
  background: none;
  color: #222;
  font: inherit;
}

.search input::placeholder {
  color: #222;
}

.help {
  width: 14px;
  height: 14px;
  margin: 0 6px 6px auto;
  border: 1px solid #0094ff;
  border-radius: 50%;
  color: #0094ff;
  font: 10px/12px "Liberation Sans", sans-serif;
}

/* ribbon */
.ribbon {
  display: flex;
  border-bottom: 1px solid #c8c8c8;
  background: #e8e8e8;
}

.group {
  display: flex;
  flex-direction: column;
  border-right: 1px solid #bdbdbd;
}

.group-body {
  display: flex;
  justify-content: center;
  height: 77px;
  padding: 0 4px;
}

.group-label {
  height: 16px;
  background: #c8c8c8;
  text-align: center;
}

.big {
  display: flex;
  flex-direction: column;
  align-items: center;
  gap: 3px;
  min-width: 42px;
  padding: 9px 3px 0;
  white-space: nowrap;
}

.big svg {
  width: 30px;
  height: 30px;
}

.caret {
  flex: none;
  width: 7px;
  height: 4px;
  background: #222;
  clip-path: polygon(0 0, 100% 0, 50% 100%);
}

.stack {
  display: grid;
  grid-auto-rows: 23px;
  align-content: center;
}

.stack-two {
  row-gap: 9px;
}

.tool {
  display: flex;
  align-items: center;
  gap: 5px;
  padding: 0 4px 0 3px;
  white-space: nowrap;
}

.stack-two .tool {
  padding: 0 5px;
}

.tool svg,
.ibtn svg {
  width: 16px;
  height: 16px;
}

.tool .caret {
  margin-left: 2px;
}

.sep {
  width: 1px;
  margin: 3px 5px;
  background: #bdbdbd;
}

.icon-grid {
  display: grid;
  grid-template-columns: repeat(3, 22px);
  grid-auto-rows: 23px;
  align-content: center;
}

.icon-grid-cols {
  grid-template-columns: none;
  grid-template-rows: repeat(3, 23px);
  grid-auto-columns: 22px;
  grid-auto-flow: column;
}

.ibtn {
  display: flex;
  align-items: center;
  justify-content: center;
}

.ibtn-mid {
  grid-row: 2;
}

.muted {
  color: #bcbcbc;
}

.var {
  font: italic bold 17px/15px "Liberation Serif", serif;
}

.var-ring {
  width: 16px;
  height: 16px;
  border: 1px solid #4fb0f5;
  border-radius: 50%;
  font-size: 14px;
  line-height: 11px;
}

.collapse {
  align-self: flex-end;
  margin: 0 3px 8px auto;
}

/* workspace */
.workspace {
  display: flex;
  flex: 1;
  min-height: 0;
}

.explorer {
  display: flex;
  flex-direction: column;
  width: 248px;
  margin-right: 11px;
}

.explorer-title {
  height: 23px;
  padding-left: 3px;
  background: #464646;
  color: #fff;
  font-size: 10px;
  line-height: 22px;
  text-align: center;
}

.explorer-tools {
  display: flex;
  justify-content: space-between;
  height: 29px;
  padding: 0 7px 1px 4px;
  background: #c8c8c8;
}

.explorer-tools button {
  display: flex;
  align-items: center;
  justify-content: center;
  width: 24px;
}

.tree {
  flex: 1;
  margin: 0;
  padding: 0;
  border: 1px solid #a0a0a0;
  border-bottom: 0;
  background: #e8e8e8;
  color: #333;
  list-style: none;
}

.tree li {
  display: flex;
  align-items: center;
  height: 20px;
}

.tree svg {
  width: 16px;
  height: 16px;
  margin: 0 1px;
}

.tree .eye {
  width: 14px;
  height: 10px;
  margin: 0 2px;
  color: #0094ff;
}

.tree span {
  padding-left: 3px;
}

.tree .off {
  color: #b0b0b0;
}

.tree .off .eye {
  color: #888;
}

/* branch cells: vertical rule in the middle, arm to the right */
.g {
  display: grid;
  place-items: center;
  width: 18px;
  height: 20px;
  background-repeat: no-repeat;
}

.line {
  background-image: linear-gradient(#222, #222);
  background-size: 1px 20px;
  background-position: 9px 0;
}

.tee,
.end {
  background-image: linear-gradient(#222, #222), linear-gradient(#222, #222);
  background-size: 1px 20px, 9px 1px;
  background-position: 9px 0, 9px 10px;
}

.end {
  background-size: 1px 10px, 9px 1px;
}

.open {
  background-image: linear-gradient(#222, #222), linear-gradient(#222, #222), linear-gradient(#222, #222);
  background-size: 1px 4px, 1px 4px, 3px 1px;
  background-position: 9px 0, 9px 16px, 15px 10px;
}

.root {
  background-size: 0 0, 0 0, 3px 1px;
}

.open::before {
  content: "";
  width: 6px;
  height: 6px;
  margin-bottom: 3px;
  border: solid #333;
  border-width: 0 1px 1px 0;
  transform: rotate(45deg);
}

.closed::before {
  margin: 0 3px 0 0;
  transform: rotate(-45deg);
}

/* 3d view */
.viewport {
  position: relative;
  display: grid;
  flex: 1;
  place-content: center;
  background: linear-gradient(#a4d0ff, #e4f0ff);
}

.scene {
  overflow: visible;
}

.plane-lines {
  fill: none;
  stroke: #4b9100;
  shape-rendering: crispEdges;
}

.plane-name {
  fill: #4b9100;
  font: 300 18px Lato, sans-serif;
}

.triad {
  position: absolute;
  bottom: 51px;
  left: 86px;
  overflow: visible;
  font: 8px "Liberation Sans", sans-serif;
}

.ax-x {
  fill: #c22a30;
}

.ax-y {
  fill: #4f9a3a;
}

.ax-z {
  fill: #2a55d8;
}

.viewcube {
  position: absolute;
  top: 26px;
  right: 57px;
  width: 53px;
  height: 53px;
  border: 1px solid #0066cc;
  background: #cbe0f4;
  color: #5c6b6c;
  font-size: 10px;
}

/* status bar */
.statusbar {
  display: grid;
  grid-template-columns: 1fr 274px;
  gap: 3px;
  height: 16px;
}

.status-panel {
  border: solid #a0a0a0;
  border-width: 1px 0 0 1px;
}
```
